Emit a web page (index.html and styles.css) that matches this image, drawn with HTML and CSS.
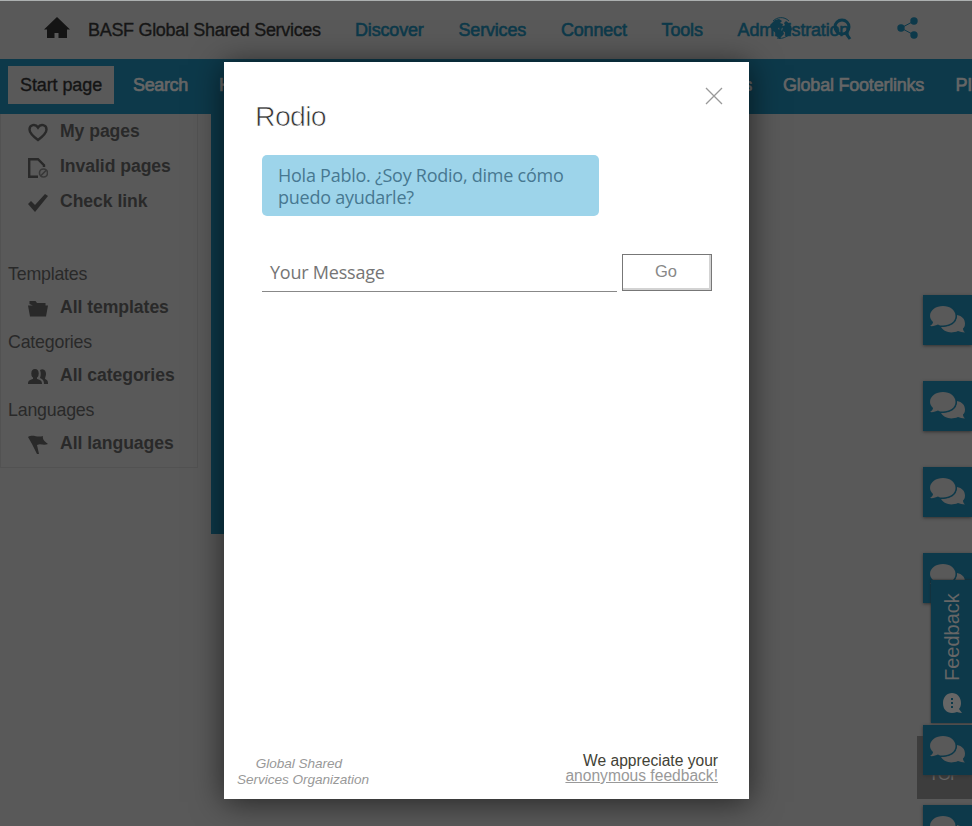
FILE: index.html
```html
<!DOCTYPE html>
<html lang="en">
<head>
<meta charset="utf-8">
<title>BASF Global Shared Services</title>
<link rel="stylesheet" href="styles.css">
</head>
<body>
<svg class="defs" width="0" height="0" aria-hidden="true">
  <symbol id="chats" viewBox="0 0 36 28">
    <path d="M27 9c5 1 8 4 8 8.500 0 3-1 4-2 5 0 2 1 3 2 4-3 0-5-1-7-1.500-7 3-14 1-17-4 9 0 16-5 16-12z"/>
    <path class="front" d="M13 0c7 0 12.500 4 12.500 10s-6 9.500-12.500 9.500c-2 0-4 0-5-1-2 1-5 2-8 1.500 2-1 3-3 3-4-2-2-3-4-3-6C0 4 6 0 13 0z"/>
  </symbol>
</svg>
<div class="page">
  <header class="top">
    <svg class="home" width="26" height="21" viewBox="0 0 26 21"><path d="M13 0 0 12.500h3V21h7.500v-5h4v5H23v-8.500h3z"/></svg>
    <span class="brand">BASF Global Shared Services</span>
    <nav class="links"><a>Discover</a><a>Services</a><a>Connect</a><a>Tools</a><a>Administration</a></nav>
    <svg class="globe" width="22" height="22" viewBox="0 0 22 22"><path d="m5 3 4-1 3 2-2 2 3 1-1 3-4 1 1 2 4 1 1 3-3 3-1 2-4-3v-3L2 13 0 8z"/><path d="m16 4 4 3 2 5-3 7-3 1-1-5-3-1 1-4 2-2-1-2z"/><path class="thin" d="M3 4C7 0 14-1 19 4M7 21c4 1 8 0 11-3"/></svg>
    <svg class="search" width="19" height="23" viewBox="0 0 19 23"><circle cx="9" cy="9" r="7"/><path d="m12 14 5 7"/></svg>
    <svg class="share" width="21" height="22" viewBox="0 0 21 22"><path d="M17 4 4 11l13 7" fill="none"/><g stroke="none"><circle cx="17" cy="4" r="3.700"/><circle cx="4" cy="11" r="3.700"/><circle cx="17" cy="18" r="3.700"/></g></svg>
  </header>
  <nav class="bar">
    <a class="current">Start page</a><a class="find">Search</a><a class="mid"><span>Home</span><span>Headerlinks</span></a><a class="foot">Global Footerlinks</a><a class="pit">PIT</a>
  </nav>
  <div class="content">
    <aside class="side">
      <div class="item"><svg width="20" height="20" viewBox="0 0 20 20"><path class="line" d="M10 17C6 14 1.500 10 1.500 6.500 1.500 1.500 7.500.5 10 4.500c2.500-4 8.500-3 8.500 2C18.500 10 14 14 10 17z"/></svg>My pages</div>
      <div class="item"><svg width="20" height="20" viewBox="0 0 20 20"><path class="line" d="M10 18.800H1.200V1.200H10l6 6V9"/><circle class="ban" cx="15.500" cy="15" r="4"/><path class="ban" d="m12.800 17.800 5.400-5.600"/></svg>Invalid pages</div>
      <div class="item"><svg width="20" height="20" viewBox="0 0 20 20"><path d="m0 11 3-3 4 4L17 1l3 2L7 19z"/></svg>Check link</div>
      <h4 class="first">Templates</h4>
      <div class="item"><svg width="20" height="20" viewBox="0 0 20 20"><path d="M1.500 5V2h6l1.500 2h8.500v2.500H5zM0 6.500h20l-2 11H2z"/></svg>All templates</div>
      <h4>Categories</h4>
      <div class="item"><svg width="20" height="20" viewBox="0 0 20 20"><ellipse cx="7" cy="6.500" rx="3.700" ry="4.500"/><path d="M5 9h4v3c3 1 5 1 5 5H0c0-4 2-4 5-5z"/><path d="M12 3c4-2 6 1 6 4 0 2-1 3-1 5 2 1 3 1 3 5h-4c0-3-1-5-4-6 1-3 1-5 0-8z"/></svg>All categories</div>
      <h4>Languages</h4>
      <div class="item"><svg width="20" height="20" viewBox="0 0 20 20"><path d="M0 2c5-3 9 1 15-1-1 3 2 6 5 8-5 2-7-1-11 1l2 9H9L4 9z"/></svg>All languages</div>
    </aside>
    <div class="hero"></div>
  </div>
</div>

<div class="top-link">TOP</div>
<div class="tiles">
  <div class="tile"><svg><use href="#chats"/></svg></div>
  <div class="tile"><svg><use href="#chats"/></svg></div>
  <div class="tile"><svg><use href="#chats"/></svg></div>
  <div class="tile"><svg><use href="#chats"/></svg></div>
  <div class="tile fifth"><svg><use href="#chats"/></svg></div>
  <div class="tile sixth"><svg><use href="#chats"/></svg></div>
</div>
<div class="feedback"><span>Feedback</span><svg width="20" height="21" viewBox="0 0 20 21"><path d="M9 0c5 0 9 4 9 10 0 3-1 5-2 6l3 4c-3 0-4-1-5-1C6 22 0 18 0 10 0 4 4 0 9 0z"/><g class="dots"><path d="M8 5h2v2H8zM8 9h2v2H8zM8 13h2v2H8z"/></g></svg></div>

<section class="modal">
  <div class="head"><h1>Rodio</h1><svg class="close" width="18" height="18" viewBox="0 0 18 18"><path d="m1 1 16 16M17 1 1 17"/></svg></div>
  <p class="bubble">Hola Pablo. ¿Soy Rodio, dime cómo puedo ayudarle?</p>
  <div class="form"><div class="input">Your Message</div><div class="go">Go</div></div>
  <footer>
    <div class="org"><span>Global Shared</span><br>Services Organization</div>
    <div class="thanks"><div>We appreciate your</div><a>anonymous feedback!</a></div>
  </footer>
</section>
</body>
</html>
```
FILE: styles.css
```css
* { box-sizing: border-box; }
body { margin: 0; width: 972px; height: 826px; overflow: hidden; position: relative; background: #595959; font-family: "Liberation Sans", Arial, sans-serif; }
.defs { position: absolute; }
.page { width: 972px; height: 826px; overflow: hidden; }

.top { position: relative; height: 59px; border-top: 1px solid #acb0b0; display: flex; align-items: center; padding-left: 44px; font-size: 18px; white-space: nowrap; }
.home { fill: #141414; margin: -5px 18px 0 0; }
.brand { color: #161616; letter-spacing: -.31px; -webkit-text-stroke: .35px; width: 267px; }
.links { display: flex; gap: 34.800px; color: #0d394a; letter-spacing: -.17px; -webkit-text-stroke: .6px; }
.globe, .search, .share { position: absolute; fill: #0d394a; }
.globe { left: 770px; top: 16px; }
.globe .thin { fill: none; stroke: #0d394a; stroke-width: 1; }
.search { left: 833px; top: 17px; fill: none; stroke: #0d394a; stroke-width: 3; }
.share { left: 897px; top: 16px; stroke: #0d394a; stroke-width: 1; }

.bar { height: 55px; background: #0d394a; display: flex; align-items: flex-start; padding: 7px 0 0 8px; font-size: 18px; line-height: 38px; color: #666; letter-spacing: -.22px; white-space: nowrap; -webkit-text-stroke: .7px; }
.bar a { flex: none; }
.current { width: 106px; padding-left: 12px; background: #595959; color: #141414; letter-spacing: -.1px; -webkit-text-stroke: .35px; }
.find { margin-left: 19px; width: 86px; letter-spacing: -.35px; }
.mid { display: flex; justify-content: space-between; width: 533px; }
.foot { margin-left: 31px; width: 172.500px; }

.content { display: flex; }
.side { width: 198px; height: 354px; border: 1px solid #525252; border-top: 0; color: #292929; }
.item { height: 35px; display: flex; align-items: center; gap: 12px; padding-left: 27px; font-size: 17.600px; letter-spacing: -.05px; font-weight: bold; }
.item svg { fill: #292929; margin-top: 2px; }
.item .line { fill: none; stroke: #292929; stroke-width: 2.400; }
.item .ban { fill: none; stroke: #383838; stroke-width: 1.600; }
.side h4 { margin: 0; height: 33px; padding-left: 7px; font-size: 17.800px; line-height: 34px; letter-spacing: -.2px; font-weight: normal; }
.side .first { margin-top: 38px; }
.hero { width: 761px; height: 420px; margin-left: 13px; background: linear-gradient(90deg, #0d394a 538px, #595959 538px); }

.top-link { position: absolute; left: 917px; top: 736px; width: 55px; height: 63px; padding-top: 29px; background: #3d3d3d; color: #666; font-size: 17px; line-height: 20px; text-align: center; letter-spacing: -.8px; }
.tiles { position: absolute; left: 923px; top: 295px; width: 49px; display: flex; flex-direction: column; gap: 36px; }
.tile { height: 50px; padding: 11px 0 0 7px; background: #0d394a; box-shadow: 0 1px 3px #333; }
.tile svg { display: block; width: 36px; height: 28px; fill: #595959; overflow: visible; }
.front { stroke: #0d394a; stroke-width: 3; paint-order: stroke; }
.tile.fifth { margin-top: 86px; }
.tile.sixth { margin-top: -6px; }
.feedback { position: absolute; left: 931px; top: 580px; width: 41px; height: 143px; display: flex; flex-direction: column; align-items: center; gap: 12px; padding: 13px 0 0 2px; background: #0d394a; box-shadow: 0 0 2px #222; color: #666; font-size: 20px; line-height: 24px; }
.feedback span { writing-mode: vertical-rl; transform: rotate(180deg); height: 88px; margin-left: -2px; }
.feedback svg { fill: #666; }
.feedback .dots { fill: #0d394a; }

.modal { position: absolute; left: 224px; top: 62px; width: 525px; height: 737px; padding: 37px 30px 0 31px; background: #fff; box-shadow: 0 3px 30px rgba(0,0,0,.6); display: flex; flex-direction: column; }
.head { display: flex; justify-content: space-between; height: 56px; }
h1 { margin: 0; font: 28.500px/34px "Liberation Sans", Arial, sans-serif; letter-spacing: -.7px; color: #333; -webkit-text-stroke: .7px #fff; }
.close { margin: -12px -3.500px 0 0; stroke: #999; stroke-width: 1.300; }
.bubble { margin: 0 0 0 7px; width: 337px; height: 61px; padding: 9px 16px; border-radius: 5px; background: #9dd4ea; color: #477891; font: 18px/22px "Open Sans", sans-serif; letter-spacing: -.25px; }
.form { display: flex; gap: 5px; margin: 38px 0 0 7px; }
.input { width: 355px; height: 38px; padding-left: 8px; border-bottom: 1px solid #888; color: #757575; font: 18px/37px "Open Sans", sans-serif; letter-spacing: -.22px; }
.go { width: 90px; height: 37px; border: 1px solid #777; box-shadow: inset -2px -2px #d3d3d3; color: #888; font-size: 16.500px; line-height: 33px; text-align: center; padding-right: 2px; }
footer { display: flex; justify-content: space-between; align-items: flex-end; margin: auto 1px 11px -18px; }
.org { text-align: center; font-size: 13.600px; line-height: 16px; font-style: italic; color: #999; letter-spacing: -.05px; }
.org span { margin-right: 8px; }
.thanks { text-align: right; font-size: 15.600px; line-height: 15px; color: #424236; padding-bottom: 5px; }
.thanks a { color: #999; text-decoration: underline; }
```
